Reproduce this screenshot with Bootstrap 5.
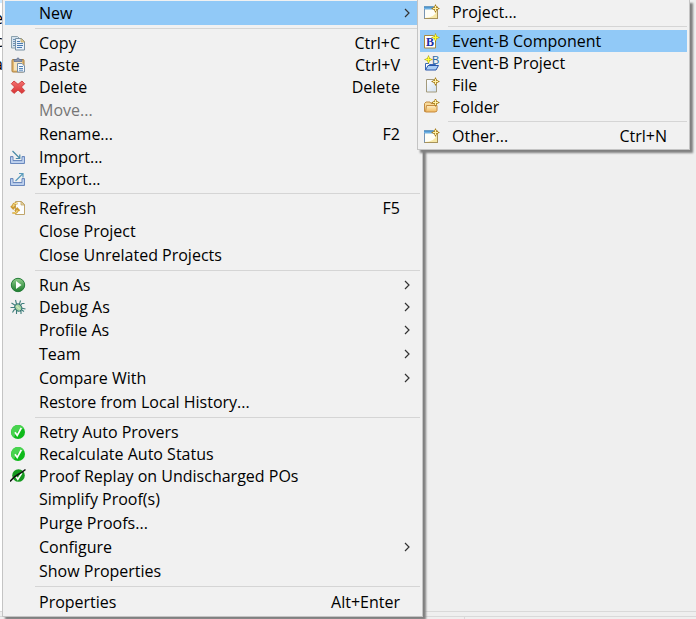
<!DOCTYPE html>
<html lang="en">
<head>
<meta charset="utf-8">
<meta name="viewport" content="width=device-width, initial-scale=1">
<title>Project Explorer</title>
<link href="https://cdn.jsdelivr.net/npm/bootstrap@5.3.0/dist/css/bootstrap.min.css" rel="stylesheet">
<style>
body{background:#efefef;font-family:"Open Sans","Noto Sans",sans-serif;font-size:16px;line-height:22px;color:#000}
.tree{width:6px;background:#fff;padding-top:4px;border-top:3px solid #cce8ff}
.tree div{height:23px;display:flex;justify-content:flex-end;padding-right:3px}
.dock-edge{border-top:1px solid #d9d9d9;height:5px}
.dock-tab{border-top:1px solid #d9d9d9;height:3px}
.dock-tab + .dock-tab{border-left:1px solid #d9d9d9}
.ctx{position:absolute;top:0;background:#f1f1f1;border:1px solid #c4c4c4;border-top:0;padding:1px 2px 2px;box-shadow:3px 3px 2px #808080}
.ctx-main{left:2px;width:421px}
.ctx-sub{left:417px;width:273px}
.entry{min-height:24px;border:0;background:transparent;color:#000;padding:0 20px 0 0;white-space:nowrap}
.entry.iconic{min-height:22px}
.entry.parent{padding-right:9px}
.entry:disabled{color:#767676}
.entry.hot,.entry:hover:enabled{background:#91c9f7}
.pic{width:34px;flex:none;padding-left:5px}
.ctx-sub .pic{width:32px;padding-left:3px}
.rule{height:1px;margin:3px 0 3px 30px;border:0;background:#d5d5d5;opacity:1}
.ctx-sub .rule{margin-left:28px}
svg{display:block}
</style>
<script src="https://cdn.jsdelivr.net/npm/bootstrap@5.3.0/dist/js/bootstrap.bundle.min.js"></script>
</head>
<body class="overflow-hidden">
<svg width="0" height="0" class="position-absolute" aria-hidden="true">
<defs>
<linearGradient id="gGreen" x1="0" y1="0" x2="0" y2="1"><stop offset="0" stop-color="#8fce8c"/><stop offset="1" stop-color="#1c7c2c"/></linearGradient>
<linearGradient id="gFold" x1="0" y1="0" x2="0" y2="1"><stop offset="0" stop-color="#fff0c8"/><stop offset="1" stop-color="#f0b85c"/></linearGradient>
<linearGradient id="gPage" x1="0" y1="0" x2="1" y2="1"><stop offset="0" stop-color="#fff"/><stop offset="1" stop-color="#cfdff0"/></linearGradient>
<linearGradient id="gRed" x1="0" y1="0" x2="0" y2="1"><stop offset="0" stop-color="#f47070"/><stop offset="1" stop-color="#d83434"/></linearGradient>
<g id="star"><path d="M12.500 0 14 3l3 1.500L14 6l-1.500 3L11 6 8 4.500 11 3z" fill="#a97f1c"/><path d="M12.500 2v5M10 4.500h5" stroke="#fff0a8" stroke-width="1.200"/></g>
<g id="brightStar"><path d="M12.500 0 13.800 3.200 17 4.500 13.800 5.800 12.500 9 11.200 5.800 8 4.500 11.200 3.200z" fill="#8a7a10"/><path d="M12.500 1.500v6M9.500 4.500h6" stroke="#ffff30" stroke-width="1.500"/></g>
<g id="wizard"><rect x="1.500" y="3" width="13" height="11.500" fill="#fffef6" stroke="#a8935a"/><path d="M2 14q9 0 12-7v7z" fill="#f6e7a6"/><path d="M1 2.500h10v3H1z" fill="#6db0e2"/><path d="M1 3h9.500" stroke="#3b7fbe"/><path d="M1.500 5v9.500" stroke="#7794b4"/><use href="#star"/></g>
<g id="tick"><circle cx="8" cy="8" r="7" fill="#0fba1b"/><path d="M1.500 6a6.800 6.800 0 0 1 12.500-1.600Q7 5 4 13.500A7 7 0 0 1 1.500 6z" fill="#48d44f"/><path d="M5 8.300 7.200 11.500 11.300 4" fill="none" stroke="#fff" stroke-width="1.700"/></g>
<g id="tray"><path d="M.5 7.500v7h14v-7h-2.500v4h-9v-4z" fill="#a9c2e6" stroke="#6b89bd"/><path d="M1.800 8.800v4.400h11.400V8.800" fill="none" stroke="#d3e1f4" stroke-width=".8"/></g>
<g id="chev"><path d="M1 1 5 5 1 9" fill="none" stroke="#333" stroke-width="1.200"/></g>
</defs>
</svg>

<div class="vh-100 d-flex flex-column" aria-hidden="true">
  <div class="tree flex-grow-1 overflow-hidden">
    <div>e</div><div>c</div><div>a</div>
  </div>
  <div class="dock-edge"></div>
  <div class="d-flex"><div class="dock-tab col-8"></div><div class="dock-tab flex-grow-1"></div></div>
</div>

<div class="ctx ctx-main d-flex flex-column" role="menu" aria-label="Project">
  <button class="entry parent hot d-flex align-items-center" role="menuitem"><span class="pic"></span>New<svg class="ms-auto" width="7" height="10"><use href="#chev"/></svg></button>
  <hr class="rule">
  <button class="entry iconic d-flex align-items-center" role="menuitem"><span class="pic"><svg width="16" height="16"><path d="M1.500 1.500h6l2 2v9.500h-8z" fill="#d6e3ee" stroke="#8ba1ad"/><path d="M3 4.500h3M3 6.500h3M3 8.500h3M3 10.500h3" stroke="#6d93b6"/><path d="M5.500 3.500h6l3 3v8.500h-9z" fill="#e8f1fa" stroke="#7891a4"/><path d="M11 3.500v3.500h3.500z" fill="#ead8a0" stroke="#b39a57" stroke-width=".7"/><path d="M7 6.500h3M7 8.500h6M7 10.500h6M7 12.500h5" stroke="#4b7db2"/></svg></span>Copy<span class="ms-auto">Ctrl+C</span></button>
  <button class="entry iconic d-flex align-items-center" role="menuitem"><span class="pic"><svg width="16" height="16"><rect x="2" y="2.500" width="12" height="12.500" rx="1" fill="#e4ba73" stroke="#a97c3c"/><rect x="4" y="4.500" width="8" height="9" fill="#f5e4bf"/><path d="M4 4.500V2.500h2.500Q8-.8 9.500 2.500H12v2z" fill="#8494b2" stroke="#657391" stroke-width=".8"/><path d="M7.500 6.500h4.500l2.500 2.500v6h-7z" fill="#f5f9ff" stroke="#7891a8"/><path d="M9 9.500h4M9 11.500h4M9 13.200h4" stroke="#5587bb"/></svg></span>Paste<span class="ms-auto">Ctrl+V</span></button>
  <button class="entry iconic d-flex align-items-center" role="menuitem"><span class="pic"><svg width="16" height="16"><path d="M4 2 8 5.300 12 2l2.700 2.700L11.400 8l3.300 3.700L12 14.400 8 11l-4 3.400-2.700-2.700L4.600 8 1.300 4.700z" fill="url(#gRed)" stroke="#cc3b3b" stroke-width=".9" stroke-linejoin="round"/></svg></span>Delete<span class="ms-auto">Delete</span></button>
  <button class="entry d-flex align-items-center" role="menuitem" disabled><span class="pic"></span>Move...</button>
  <button class="entry d-flex align-items-center" role="menuitem"><span class="pic"></span>Rename...<span class="ms-auto">F2</span></button>
  <button class="entry iconic d-flex align-items-center" role="menuitem"><span class="pic"><svg width="16" height="16"><use href="#tray"/><path d="M2.500 2 9.500 9M9.800 5.500v4H5.800" fill="none" stroke="#4a8ba6" stroke-width="1.200"/></svg></span>Import...</button>
  <button class="entry iconic d-flex align-items-center" role="menuitem"><span class="pic"><svg width="16" height="16"><use href="#tray"/><path d="M5.500 10 12.500 3M9 2.500h4v4" fill="none" stroke="#5a9bbb" stroke-width="1.200"/></svg></span>Export...</button>
  <hr class="rule">
  <button class="entry iconic d-flex align-items-center" role="menuitem"><span class="pic"><svg width="16" height="16"><path d="M5.500 1.500h6l3 3v10h-9z" fill="#fbfcfd" stroke="#c0a56a"/><path d="M11 1.500v3.500h3.500z" fill="#eddcaa" stroke="#b99b59" stroke-width=".7"/><path d="M7.500 3.500H5Q2.500 4 3 7.500M1 6l2.200 2.500L5.500 6M2.500 13H5Q7.800 12.500 7.200 9.500M5 11l2.200-2.600L9.500 11" fill="none" stroke="#cc9a35" stroke-width="1.900"/><path d="M7 3.500H5Q3 4 3 7M3 13H5Q7.200 12.500 7.200 10" fill="none" stroke="#fbe48c"/></svg></span>Refresh<span class="ms-auto">F5</span></button>
  <button class="entry d-flex align-items-center" role="menuitem"><span class="pic"></span>Close Project</button>
  <button class="entry d-flex align-items-center" role="menuitem"><span class="pic"></span>Close Unrelated Projects</button>
  <hr class="rule">
  <button class="entry parent iconic d-flex align-items-center" role="menuitem"><span class="pic"><svg width="16" height="16"><circle cx="8" cy="8" r="6.700" fill="url(#gGreen)" stroke="#247c38"/><path d="M6 4 11.500 8 6 12z" fill="#fff"/></svg></span>Run As<svg class="ms-auto" width="7" height="10"><use href="#chev"/></svg></button>
  <button class="entry parent iconic d-flex align-items-center" role="menuitem"><span class="pic"><svg width="16" height="16"><path d="M5.500 1 6.500 5M10.500 1.500 9.500 5M1.500 4 5.500 6.500M14.500 4.500h-2.500L10.500 6.500M.500 8.500H5M11 9l4.500 1M2.500 13.500 4 11l2-1M6.500 11v4M9.500 11l1.500 1.500V15M11 10.500l3 2" fill="none" stroke="#3f7e7b" stroke-width="1.100"/><ellipse cx="8.300" cy="8.500" rx="3.200" ry="3.800" transform="rotate(-35 8.300 8.500)" fill="#a9d5a4" stroke="#2f7071"/><path d="M6.500 7 10 10.500" stroke="#e5f5c8"/></svg></span>Debug As<svg class="ms-auto" width="7" height="10"><use href="#chev"/></svg></button>
  <button class="entry parent d-flex align-items-center" role="menuitem"><span class="pic"></span>Profile As<svg class="ms-auto" width="7" height="10"><use href="#chev"/></svg></button>
  <button class="entry parent d-flex align-items-center" role="menuitem"><span class="pic"></span>Team<svg class="ms-auto" width="7" height="10"><use href="#chev"/></svg></button>
  <button class="entry parent d-flex align-items-center" role="menuitem"><span class="pic"></span>Compare With<svg class="ms-auto" width="7" height="10"><use href="#chev"/></svg></button>
  <button class="entry d-flex align-items-center" role="menuitem"><span class="pic"></span>Restore from Local History...</button>
  <hr class="rule">
  <button class="entry iconic d-flex align-items-center" role="menuitem"><span class="pic"><svg width="16" height="16"><use href="#tick"/></svg></span>Retry Auto Provers</button>
  <button class="entry iconic d-flex align-items-center" role="menuitem"><span class="pic"><svg width="16" height="16"><use href="#tick"/></svg></span>Recalculate Auto Status</button>
  <button class="entry iconic d-flex align-items-center" role="menuitem"><span class="pic"><svg width="16" height="16"><circle cx="8.500" cy="7.500" r="6.300" fill="#169a20"/><path d="M5.500 8 7.800 11.300 11.800 5" fill="none" stroke="#fff" stroke-width="1.600"/><path d="M0 13.500Q4 8.500 8 6.500T15.500 1.500" fill="none" stroke="#111" stroke-width="1.500"/></svg></span>Proof Replay on Undischarged POs</button>
  <button class="entry d-flex align-items-center" role="menuitem"><span class="pic"></span>Simplify Proof(s)</button>
  <button class="entry d-flex align-items-center" role="menuitem"><span class="pic"></span>Purge Proofs...</button>
  <button class="entry parent d-flex align-items-center" role="menuitem"><span class="pic"></span>Configure<svg class="ms-auto" width="7" height="10"><use href="#chev"/></svg></button>
  <button class="entry d-flex align-items-center" role="menuitem"><span class="pic"></span>Show Properties</button>
  <hr class="rule">
  <button class="entry d-flex align-items-center" role="menuitem"><span class="pic"></span>Properties<span class="ms-auto">Alt+Enter</span></button>
</div>

<div class="ctx ctx-sub d-flex flex-column" role="menu" aria-label="New">
  <button class="entry iconic d-flex align-items-center" role="menuitem"><span class="pic"><svg width="17" height="16"><use href="#wizard"/></svg></span>Project...</button>
  <hr class="rule">
  <button class="entry iconic hot d-flex align-items-center" role="menuitem"><span class="pic"><svg width="17" height="16"><path d="M1.500 2.500h9l2 2v10.500h-11z" fill="#fff" stroke="#a98a3c"/><text x="3" y="13" font-family="Liberation Serif,serif" font-weight="700" font-size="12" fill="#1c2fa8">B</text><use href="#brightStar"/></svg></span>Event-B Component</button>
  <button class="entry iconic d-flex align-items-center" role="menuitem"><span class="pic"><svg width="17" height="16"><path d="M2.500 15V8.500h3l1 1h6v2" fill="#fdfdff" stroke="#3768b5"/><path d="M2.500 15 5 10.500h10.500L13 15z" fill="#a9cdf5" stroke="#2856ab"/><text x="9" y="8.500" font-family="Liberation Sans,sans-serif" font-size="11" fill="#2c6ca8">B</text><use href="#brightStar" x="-7"/></svg></span>Event-B Project</button>
  <button class="entry iconic d-flex align-items-center" role="menuitem"><span class="pic"><svg width="17" height="16"><path d="M3.500 2.500h10v12.500h-10z" fill="url(#gPage)" stroke="#a39a7c"/><use href="#star"/></svg></span>File</button>
  <button class="entry iconic d-flex align-items-center" role="menuitem"><span class="pic"><svg width="17" height="16"><path d="M1.500 12.500V4.500L3 3h4l1 1.500h5.500v8z" fill="#f7d999" stroke="#c18b42"/><path d="M3.500 6.500h10.500v5l-1.500 1.500h-10z" fill="url(#gFold)" stroke="#c78b40" stroke-linejoin="round"/><use href="#star" y="-1"/></svg></span>Folder</button>
  <hr class="rule">
  <button class="entry iconic d-flex align-items-center" role="menuitem"><span class="pic"><svg width="17" height="16"><use href="#wizard"/></svg></span>Other...<span class="ms-auto">Ctrl+N</span></button>
</div>
</body>
</html>
